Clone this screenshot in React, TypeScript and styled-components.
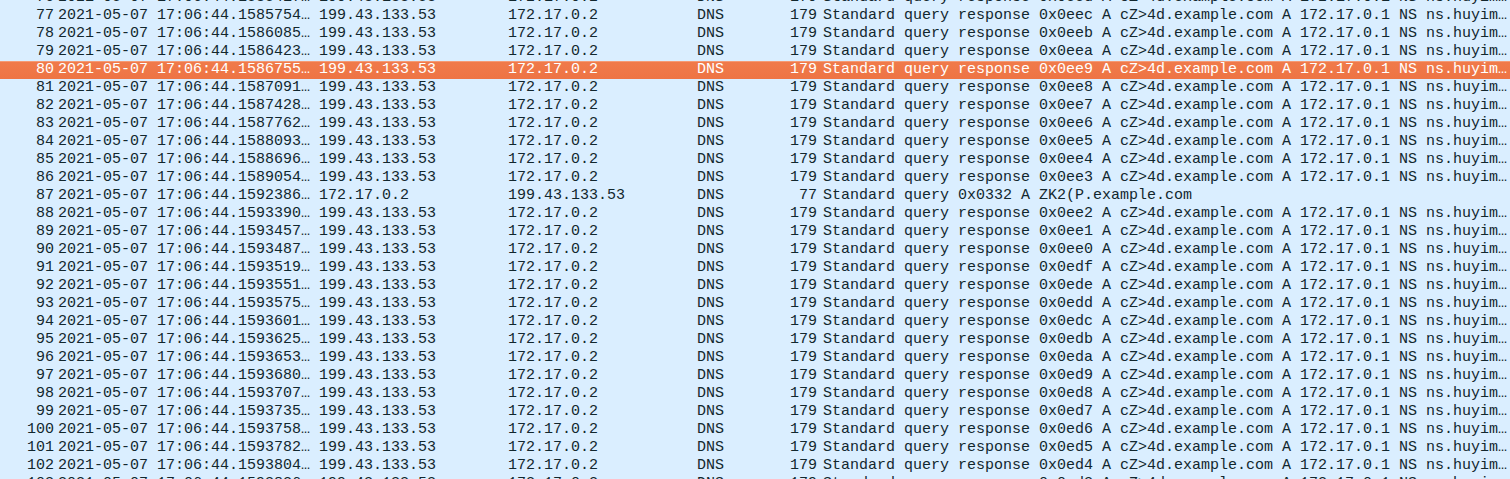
import styled, { createGlobalStyle } from 'styled-components';

const GlobalStyle = createGlobalStyle`
    html, body {
        margin: 0;
        padding: 0;
        background: #daeeff;
        overflow: hidden;
    }
`;

const List = styled.div`
    width: 1510px;
    height: 479px;
    overflow: hidden;
    background: #daeeff;
    font-family: "Liberation Mono", "DejaVu Sans Mono", monospace;
    font-size: 15px;
    color: #12272e;
`;

// scroll offset: the first row is partly hidden above the viewport
const Scroller = styled.div`
    margin-top: -11px;
`;

const Row = styled.div<{ $selected?: boolean }>`
    display: grid;
    grid-template-columns: 54px 261px 189px 189px 66px 60px 1fr;
    height: 18px;
    line-height: 18px;
    white-space: nowrap;
    box-sizing: border-box;
    background: ${(p) => (p.$selected ? 'linear-gradient(#f59a74 0, #f59a74 1px, #f07a4a 1px, #ee7444 100%)' : 'transparent')};
    color: ${(p) => (p.$selected ? '#ffffff' : 'inherit')};
`;

const Cell = styled.div<{ $right?: boolean; $pad?: number }>`
    overflow: hidden;
    text-align: ${(p) => (p.$right ? 'right' : 'left')};
    padding-left: ${(p) => (p.$right ? 0 : p.$pad ?? 4)}px;
    padding-right: ${(p) => (p.$right ? p.$pad ?? 0 : 0)}px;
`;

type Packet = {
    no: number;
    time: string;
    src: string;
    dst: string;
    len: number;
    info: string;
};

const SERVER = '199.43.133.53';
const CLIENT = '172.17.0.2';

const resp = (id: string) => `Standard query response ${id} A cZ>4d.example.com A 172.17.0.1 NS ns.huyim…`;

const rows: [number, string, string][] = [
    [76, '1585417', '0x0eed'],
    [77, '1585754', '0x0eec'],
    [78, '1586085', '0x0eeb'],
    [79, '1586423', '0x0eea'],
    [80, '1586755', '0x0ee9'],
    [81, '1587091', '0x0ee8'],
    [82, '1587428', '0x0ee7'],
    [83, '1587762', '0x0ee6'],
    [84, '1588093', '0x0ee5'],
    [85, '1588696', '0x0ee4'],
    [86, '1589054', '0x0ee3'],
    [87, '1592386', ''],
    [88, '1593390', '0x0ee2'],
    [89, '1593457', '0x0ee1'],
    [90, '1593487', '0x0ee0'],
    [91, '1593519', '0x0edf'],
    [92, '1593551', '0x0ede'],
    [93, '1593575', '0x0edd'],
    [94, '1593601', '0x0edc'],
    [95, '1593625', '0x0edb'],
    [96, '1593653', '0x0eda'],
    [97, '1593680', '0x0ed9'],
    [98, '1593707', '0x0ed8'],
    [99, '1593735', '0x0ed7'],
    [100, '1593758', '0x0ed6'],
    [101, '1593782', '0x0ed5'],
    [102, '1593804', '0x0ed4'],
    [103, '1593826', '0x0ed3'],
];

const packets: Packet[] = rows.map(([no, t, id]) =>
    id
        ? { no, time: `2021-05-07 17:06:44.${t}…`, src: SERVER, dst: CLIENT, len: 179, info: resp(id) }
        : {
              no,
              time: `2021-05-07 17:06:44.${t}…`,
              src: CLIENT,
              dst: SERVER,
              len: 77,
              info: 'Standard query 0x0332 A ZK2(P.example.com',
          }
);

export default function App() {
    return (
        <List>
            <GlobalStyle />
            <Scroller>
                {packets.map((p) => (
                    <Row key={p.no} $selected={p.no === 80}>
                        <Cell $right>{p.no}</Cell>
                        <Cell>{p.time}</Cell>
                        <Cell>{p.src}</Cell>
                        <Cell>{p.dst}</Cell>
                        <Cell>DNS</Cell>
                        <Cell $right $pad={2}>{p.len}</Cell>
                        <Cell>{p.info}</Cell>
                    </Row>
                ))}
            </Scroller>
        </List>
    );
}
